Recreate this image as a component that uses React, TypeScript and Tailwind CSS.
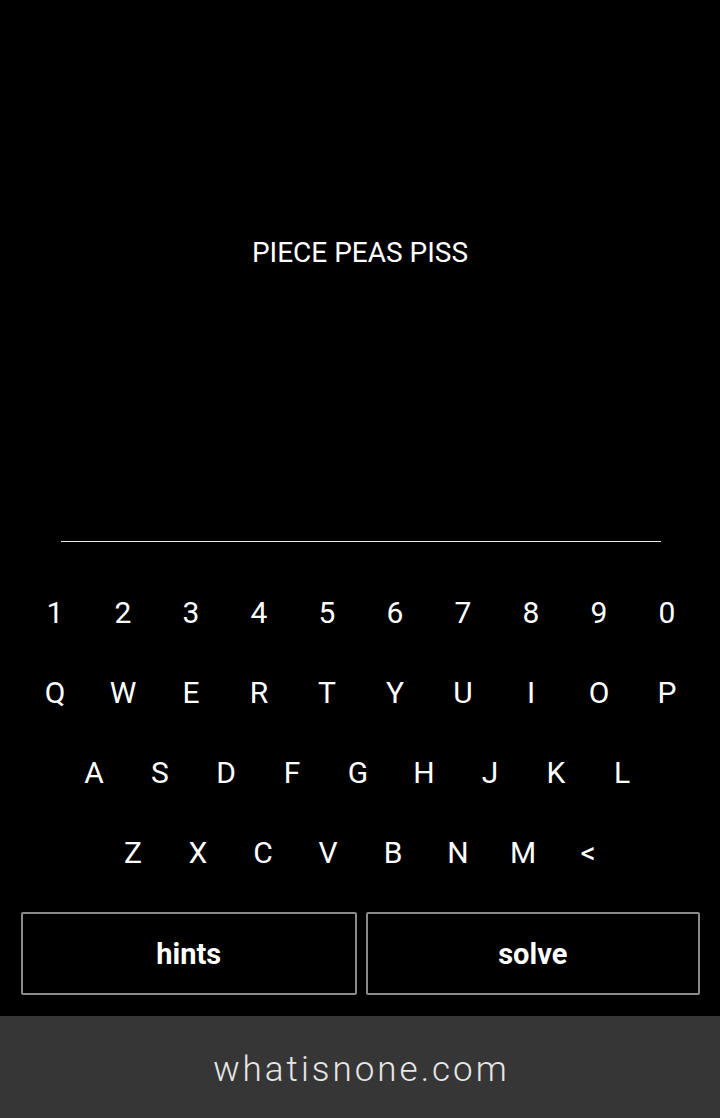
import React from "react";

const rows: { keys: string[]; w: string; extra: string }[] = [
  { keys: ["1", "2", "3", "4", "5", "6", "7", "8", "9", "0"], w: "w-[68px]", extra: "pl-[2px]" },
  { keys: ["Q", "W", "E", "R", "T", "Y", "U", "I", "O", "P"], w: "w-[68px]", extra: "pl-[2px]" },
  { keys: ["A", "S", "D", "F", "G", "H", "J", "K", "L"], w: "w-[66px]", extra: "pr-[4px]" },
  { keys: ["Z", "X", "C", "V", "B", "N", "M", "<"], w: "w-[65px]", extra: "pl-px" },
];

export default function App() {
  return (
    <div
      className="w-[720px] h-[1118px] bg-black text-white flex flex-col overflow-hidden"
      style={{ fontFamily: "Roboto, 'Noto Sans', sans-serif" }}
    >
      <div className="h-[541px] flex justify-center pt-[236px]">
        <div className="text-[28px] leading-[34px] h-[34px]">PIECE PEAS PISS</div>
      </div>
      <div className="ml-[61px] w-[600px] h-px bg-[#e8e8e8]" />
      <div className="mt-[31px] flex flex-col">
        {rows.map((r, i) => (
          <div key={i} className={`h-[80px] flex justify-center items-center ${r.extra}`}>
            {r.keys.map((k) => (
              <div key={k} className={`${r.w} text-center text-[30px] leading-[80px]`}>
                {k}
              </div>
            ))}
          </div>
        ))}
      </div>
      <div className="mt-[19px] flex gap-[9px] pl-[21px] pr-[20px]">
        <button className="w-[336px] h-[83px] border-2 border-[#8a8a8a] rounded-[2px] bg-black text-white text-[29px] font-bold pt-[3px]">
          hints
        </button>
        <button className="w-[335px] h-[83px] border-2 border-[#8a8a8a] rounded-[2px] bg-black text-white text-[29px] font-bold pt-[3px]">
          solve
        </button>
      </div>
      <div className="mt-[21px] h-[102px] bg-[#363636] flex items-center justify-center pt-[7px]">
        <div className="text-[35px] font-light tracking-[3px] text-[#e6e6e6] pl-[3px]">whatisnone.com</div>
      </div>
    </div>
  );
}
